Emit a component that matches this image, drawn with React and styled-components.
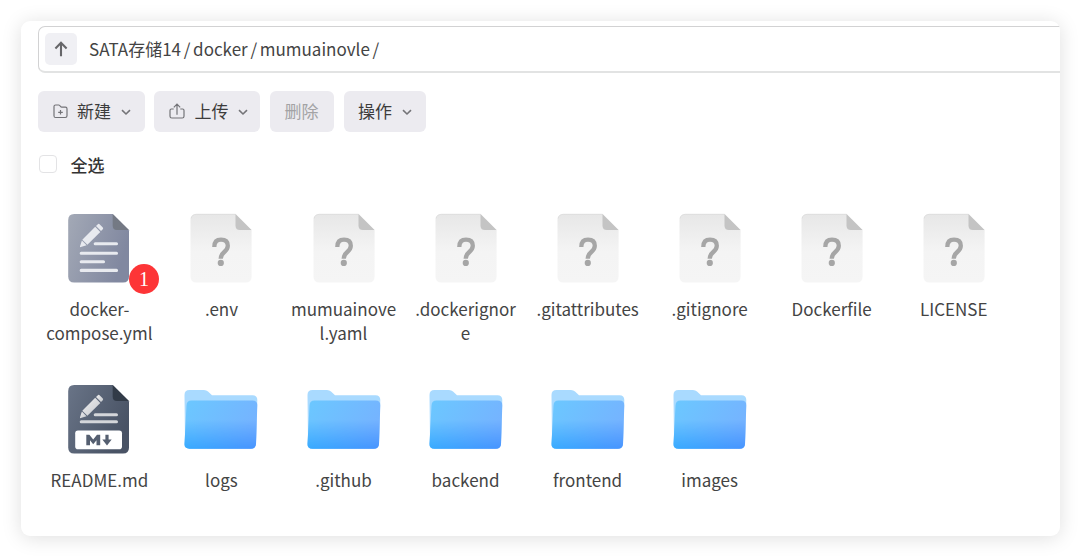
import React from 'react';
import styled, { createGlobalStyle } from 'styled-components';

const GlobalStyle = createGlobalStyle`
  * { box-sizing: border-box; }
  body {
    margin: 0;
    background: #fff;
    color: #444;
    font-family: "Noto Sans CJK SC", "Noto Sans", sans-serif;
    font-size: 17px;
  }
`;

const Page = styled.div`
  width: 1080px;
  height: 556px;
  padding: 21px 20px 20px 21px;
  overflow: hidden;
`;

const Panel = styled.main`
  height: 514.5px;
  padding: 5px 0 0 17px;
  border-radius: 9px;
  background: #fff;
  box-shadow: 0 2px 20px rgba(0, 0, 0, 0.13);
  overflow: hidden;
`;

const PathBar = styled.nav`
  display: flex;
  align-items: center;
  height: 47px;
  padding-left: 6px;
  border: 1px solid #d2d2d3;
  border-right: 0;
  border-bottom: 2px solid #e2e3e3;
  border-radius: 7px 0 0 7px;
`;

const UpButton = styled.button`
  display: flex;
  align-items: center;
  justify-content: center;
  width: 32px;
  height: 32px;
  margin: 0 12px 1px 0;
  padding: 0;
  border: 0;
  border-radius: 5px;
  background: #f0f0f4;
`;

const Crumb = styled.span`
  line-height: 24px;
`;

const Slash = styled.span`
  margin: 0 2.7px;
  line-height: 24px;
`;

const Toolbar = styled.div`
  display: flex;
  gap: 9.8px;
  padding-top: 17.5px;
`;

const ToolButton = styled.button`
  display: flex;
  align-items: center;
  width: ${(p) => p.$width}px;
  height: 41.5px;
  padding: 0 0 1px 14.5px;
  border: 0;
  border-radius: 6px;
  background: #ecebf0;
  color: ${(p) => (p.disabled ? '#a3a3a5' : '#3c3c3c')};
  font: inherit;

  .lead { margin: 1px 9.5px 0 0; }
  .chevron { margin: 4px 0 0 10px; }
`;

const SelectAll = styled.label`
  display: flex;
  align-items: center;
  gap: 13.5px;
  height: 24px;
  margin: 20px 0 0 1px;
  color: #333;
  font-weight: 500;
`;

const Checkbox = styled.input`
  appearance: none;
  width: 18px;
  height: 18px;
  margin: 0;
  border: 1px solid #e3e3e5;
  border-radius: 4px;
  background: #fff;
`;

const Files = styled.section`
  display: grid;
  grid-template-columns: repeat(8, 122.05px);
  grid-auto-rows: 171px;
  padding: 34px 0 0 0.4px;
`;

const FileItem = styled.div`
  display: flex;
  flex-direction: column;
  align-items: center;
`;

const IconFrame = styled.div`
  position: relative;
  width: 76px;
  height: 76px;
  margin-bottom: 11px;

  svg { display: block; }
`;

const FileName = styled.div`
  width: 107px;
  line-height: 24px;
  text-align: center;
  overflow-wrap: anywhere;
`;

const Badge = styled.span`
  position: absolute;
  left: 67.600px;
  top: 54px;
  width: 30px;
  height: 30px;
  border-radius: 50%;
  background: #fd3537;
  color: #fff;
  font: 20px/30px "Liberation Serif", serif;
  text-align: center;
`;

function ArrowUp() {
  return (
    <svg width="14" height="16" viewBox="0 0 14 16" fill="none" stroke="#666669" strokeWidth="2.1">
      <path d="M7 15.3V2M1.4 7.4 7 1.8l5.600 5.600" />
    </svg>
  );
}

function FolderPlus() {
  return (
    <svg className="lead" width="15" height="15" viewBox="0 0 15 15" fill="none" stroke="#737377" strokeWidth="1.2">
      <path d="M1 2.6Q1 1 2.6 1h3.1q.6 0 1 .5l1 1.2q.3.4.9.4h3.8q1.6 0 1.6 1.6v7.1q0 1.700-1.6 1.700H2.600Q1 13.500 1 11.800ZM7.500 6v4.600M5.200 8.300h4.600" />
    </svg>
  );
}

function Upload() {
  return (
    <svg className="lead" width="16" height="16" viewBox="0 0 16 16" fill="none" stroke="#737377" strokeWidth="1.2">
      <path d="M4.700 6H2.400Q1 6 1 7.400v5.800Q1 15 2.800 15h10.400q1.800 0 1.800-1.800V7.400Q15 6 13.600 6h-2.300M8 11.800V1.300M4.800 4.300 8 1.100l3.200 3.200" />
    </svg>
  );
}

function Chevron() {
  return (
    <svg className="chevron" width="10" height="7" viewBox="0 0 10 7" fill="none" stroke="#747478" strokeWidth="1.6">
      <path d="m1 1.200 4 3.800 4-3.800" />
    </svg>
  );
}

const DARK_SHEET = 'M13.200 4H51.700L68 20.500V66.500Q68 72.500 62 72.500H13.200Q7.200 72.500 7.200 66.500V10Q7.200 4 13.200 4Z';
const DARK_FOLD = 'M51.700 4 68 20H56Q51.700 20 51.700 15.500Z';
const SHEET = 'M13.500 4H52.500L68.600 20.500V66.500Q68.600 72.500 62.600 72.500H13.500Q7.500 72.500 7.500 66.500V10Q7.500 4 13.500 4Z';
const FOLD = 'M52.500 4 68.600 20H57Q52.500 20 52.500 15.500Z';

function Pencil({ fill }) {
  return (
    <g fill={fill}>
      <path d="M19 36.300 20.900 30.500 25.600 35.200 19.800 37.100Q18.800 37.300 19 36.300Z" />
      <path d="M21.300 29.700 34.200 16.800 39.300 21.900 26.400 34.800Z" />
      <path d="M35 16 36.600 14.400Q37.700 13.300 38.800 14.400L41.600 17.200Q42.700 18.300 41.600 19.400L40 21Z" />
    </g>
  );
}

function TextFileIcon() {
  return (
    <svg width="76" height="76" viewBox="0 0 76 76">
      <defs>
        <linearGradient id="slate" x1="0" y1="0" x2="1" y2=".35">
          <stop stopColor="#a3a9b6" />
          <stop offset="1" stopColor="#8188a0" />
        </linearGradient>
      </defs>
      <path d={DARK_SHEET} fill="url(#slate)" />
      <path d={DARK_FOLD} fill="#747984" />
      <Pencil fill="#e8eaef" />
      <path d="M34.200 33.800H55.500M20.200 43.200H55.500M20.200 51.800H42.500M20.200 60.400H55.500" stroke="#e8eaef" strokeWidth="3.100" strokeLinecap="round" />
    </svg>
  );
}

function MarkdownIcon() {
  return (
    <svg width="76" height="76" viewBox="0 0 76 76">
      <defs>
        <linearGradient id="ink" x1="0" y1="0" x2="1" y2=".5">
          <stop stopColor="#697487" />
          <stop offset="1" stopColor="#495365" />
        </linearGradient>
        <linearGradient id="silver" x1="0" y1="0" x2="1" y2="1">
          <stop stopColor="#eeeeef" />
          <stop offset="1" stopColor="#c6c9ce" />
        </linearGradient>
      </defs>
      <path d={DARK_SHEET} fill="url(#ink)" />
      <path d={DARK_FOLD} fill="#323b48" />
      <Pencil fill="url(#silver)" />
      <path d="M34.200 33.800H55.500M20.200 40.800H55.500" stroke="#d4d6da" strokeWidth="3" strokeLinecap="round" />
      <rect x="14.200" y="49.500" width="46.800" height="18.700" rx="2.800" fill="#fff" />
      <path d="M25.300 53.700H28.400L32.200 58.500 36 53.700H39.200V64.300H35.500V59.300L32.200 63.200 29 59.300V64.300H25.300Z" fill="#555f70" />
      <path d="M44.400 53.700H47.600V58.600H50.700L46 64.500 41.300 58.600H44.400Z" fill="#555f70" />
    </svg>
  );
}

function UnknownIcon() {
  return (
    <svg width="76" height="76" viewBox="0 0 76 76">
      <defs>
        <linearGradient id="paper" x1="0" y1="0" x2="0" y2="1">
          <stop stopColor="#e7e7e7" />
          <stop offset=".55" stopColor="#f4f4f4" />
          <stop offset="1" stopColor="#f5f5f5" />
        </linearGradient>
      </defs>
      <path d={SHEET} fill="url(#paper)" />
      <path d="M8 8.500Q9 4.300 13.500 4.300H52.500" fill="none" stroke="#dadada" strokeWidth=".7" />
      <path d={FOLD} fill="#c4c4c4" />
      <path d="M31.300 37Q31.300 29.700 38 29.700Q44.800 29.700 44.800 35.700Q44.800 39 41.300 42Q37.700 45 37.700 48.800" fill="none" stroke="#a6a6a6" strokeWidth="4.300" />
      <circle cx="37.800" cy="52.900" r="3.100" fill="#a6a6a6" />
    </svg>
  );
}

const FOLDER_FRONT = 'M8.500 19.500H69.500Q74.500 19.500 74.300 24.500L73 63Q72.800 67.700 67.800 67.700H6.500Q1.300 67.700 1.500 63L3.500 24.500Q3.700 19.500 8.500 19.500Z';

function FolderIcon() {
  return (
    <svg width="76" height="76" viewBox="0 0 76 76">
      <defs>
        <linearGradient id="sky" x1="0" y1="0" x2="1" y2=".4">
          <stop stopColor="#6bc8ff" />
          <stop offset="1" stopColor="#75b3ff" />
        </linearGradient>
        <linearGradient id="deep" x1="0" y1="0" x2="1" y2="0">
          <stop stopColor="#35a9ff" />
          <stop offset="1" stopColor="#4592ff" />
        </linearGradient>
        <linearGradient id="fade" x1="0" y1="0" x2="0" y2="1">
          <stop offset=".4" stopColor="#000" />
          <stop offset="1" stopColor="#fff" />
        </linearGradient>
        <mask id="lower" maskUnits="userSpaceOnUse" x="0" y="19" width="76" height="50">
          <rect y="19" width="76" height="50" fill="url(#fade)" />
        </mask>
      </defs>
      <path d="M1.500 14Q1.500 9 6.500 9H21Q23.500 9 25 10.500L29 14.300H69.500Q74.300 14.300 74.300 19L73 60H2Z" fill="#a9daff" />
      <path d={FOLDER_FRONT} fill="url(#sky)" />
      <path d={FOLDER_FRONT} fill="url(#deep)" mask="url(#lower)" />
    </svg>
  );
}

const ICONS = { text: TextFileIcon, markdown: MarkdownIcon, unknown: UnknownIcon, folder: FolderIcon };

const FILES = [
  { name: 'docker-compose.yml', type: 'text', badge: '1' },
  { name: '.env', type: 'unknown' },
  { name: 'mumuainovel.yaml', type: 'unknown' },
  { name: '.dockerignore', type: 'unknown' },
  { name: '.gitattributes', type: 'unknown' },
  { name: '.gitignore', type: 'unknown' },
  { name: 'Dockerfile', type: 'unknown' },
  { name: 'LICENSE', type: 'unknown' },
  { name: 'README.md', type: 'markdown' },
  { name: 'logs', type: 'folder' },
  { name: '.github', type: 'folder' },
  { name: 'backend', type: 'folder' },
  { name: 'frontend', type: 'folder' },
  { name: 'images', type: 'folder' },
];

export default function App() {
  return (
    <Page>
      <GlobalStyle />
      <Panel>
        <PathBar>
          <UpButton aria-label="up"><ArrowUp /></UpButton>
          <Crumb>SATA存储14</Crumb>
          <Slash>/</Slash>
          <Crumb>docker</Crumb>
          <Slash>/</Slash>
          <Crumb>mumuainovle</Crumb>
          <Slash>/</Slash>
        </PathBar>
        <Toolbar>
          <ToolButton $width={106.7}><FolderPlus />新建<Chevron /></ToolButton>
          <ToolButton $width={105.7}><Upload />上传<Chevron /></ToolButton>
          <ToolButton $width={63.8} disabled>删除</ToolButton>
          <ToolButton $width={82.3}>操作<Chevron /></ToolButton>
        </Toolbar>
        <SelectAll><Checkbox type="checkbox" />全选</SelectAll>
        <Files>
          {FILES.map(({ name, type, badge }) => {
            const Icon = ICONS[type];
            return (
              <FileItem key={name}>
                <IconFrame>
                  <Icon />
                  {badge && <Badge>{badge}</Badge>}
                </IconFrame>
                <FileName>{name}</FileName>
              </FileItem>
            );
          })}
        </Files>
      </Panel>
    </Page>
  );
}
